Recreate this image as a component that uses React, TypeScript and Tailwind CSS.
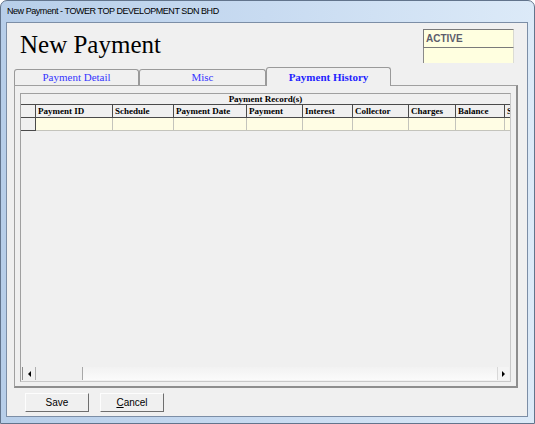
import React from "react";

const serif = { fontFamily: '"Liberation Serif", "Times New Roman", serif' };
const sans = { fontFamily: '"Liberation Sans", Arial, sans-serif' };

const cols: { label: string; w: number }[] = [
  { label: "Payment ID", w: 77 },
  { label: "Schedule", w: 61 },
  { label: "Payment Date", w: 73 },
  { label: "Payment", w: 56 },
  { label: "Interest", w: 50 },
  { label: "Collector", w: 56 },
  { label: "Charges", w: 47 },
  { label: "Balance", w: 49 },
  { label: "Status", w: 60 },
];

function Tab({ label, w, selected }: { label: string; w: number; selected?: boolean }) {
  if (selected) {
    return (
      <div
        className="relative z-10 -mb-px flex h-[19px] items-center justify-center rounded-t-[3px] border-l border-r border-t border-[#9a9a9a] bg-[#f0f0f0] text-[11px] font-bold leading-none text-[#1f1fff]"
        style={{ ...serif, width: w }}
      >
        <span className="mt-[1px]">{label}</span>
      </div>
    );
  }
  return (
    <div
      className="flex h-[16px] items-center justify-center rounded-t-[3px] border-l border-r border-t border-[#9a9a9a] bg-[#f0f0f0] text-[11px] leading-none text-[#3535ff]"
      style={{ ...serif, width: w }}
    >
      <span className="mt-[-1px]">{label}</span>
    </div>
  );
}

function Btn({ children }: { children: React.ReactNode }) {
  return (
    <div
      className="flex h-[19px] w-[64px] items-center justify-center border-b border-l border-r border-t border-b-[#6e6e6e] border-l-[#fdfdfd] border-r-[#6e6e6e] border-t-[#fdfdfd] bg-[#f0f0f0] text-[10px] leading-none text-black"
      style={sans}
    >
      {children}
    </div>
  );
}

export default function App() {
  return (
    <div className="flex h-[424px] w-[535px] flex-col overflow-hidden rounded-t-[7px] border border-[#62748c] bg-linear-to-r from-[#b7cee9] via-[#c8dbf1] to-[#dceaf8] px-[5px] pb-[6px]">
      {/* title bar */}
      <div
        className="flex h-[21px] items-center pl-[1px] pt-[1px] text-[9px] tracking-[-0.45px] text-black"
        style={sans}
      >
        New Payment - TOWER TOP DEVELOPMENT SDN BHD
      </div>

      {/* client area */}
      <div className="flex w-[522px] flex-1 flex-col border border-[#7c8ea6] bg-[#f0f0f0]">
        {/* header */}
        <div className="flex h-[44px] items-start justify-between px-[13px]">
          <div className="mt-[9px] text-[25px] leading-none text-black" style={serif}>
            New Payment
          </div>
          <div className="mt-[6px] flex w-[91px] flex-col">
            <div
              className="flex h-[19px] items-center border-b border-l border-t border-r border-b-[#7a7a7a] border-l-[#7a7a7a] border-t-[#7a7a7a] border-r-[#d8d8d0] bg-[#ffffe0] pl-[2px] text-[10px] font-bold leading-none text-[#5c5c6c]"
              style={sans}
            >
              ACTIVE
            </div>
            <div className="h-[15px] border-l border-r border-l-[#8a8a8a] border-r-[#dcdcd4] bg-[#ffffe0]" />
          </div>
        </div>

        {/* tabs */}
        <div className="flex h-[18px] items-end pl-[7px]">
          <Tab label="Payment Detail" w={125} />
          <Tab label="Misc" w={127} />
          <Tab label="Payment History" w={125} selected />
        </div>

        {/* tab panel */}
        <div className="ml-[7px] h-[303px] w-[504px] border-b-2 border-l border-r-2 border-t border-b-[#8e8e8e] border-l-[#a0a0a0] border-r-[#8e8e8e] border-t-[#a0a0a0] bg-[#f0f0f0] pl-[5px] pt-[7px]">
          {/* grid */}
          <div className="flex h-[289px] w-[491px] flex-col overflow-hidden border-l border-t border-r border-b border-l-[#a0a0a0] border-t-[#a0a0a0] border-r-[#c8c8c8] border-b-[#c8c8c8] bg-[#f0f0f0]">
            <div
              className="flex h-[10px] items-center justify-center text-[9px] font-bold leading-none text-black"
              style={serif}
            >
              <span className="mt-[1px]">Payment Record(s)</span>
            </div>
            {/* header row */}
            <div className="flex h-[14px] shrink-0 border-t border-b border-[#4a4a4a]" style={serif}>
              <div className="w-[15px] shrink-0 border-r border-[#4a4a4a]" />
              {cols.map((c) => (
                <div
                  key={c.label}
                  className="flex shrink-0 items-center overflow-hidden whitespace-nowrap border-r border-[#4a4a4a] pl-[2px] text-[9px] font-bold leading-none text-black"
                  style={{ width: c.w }}
                >
                  {c.label}
                </div>
              ))}
            </div>
            {/* data row */}
            <div className="flex h-[13px] shrink-0">
              <div className="w-[15px] shrink-0 border-b border-r border-[#4a4a4a] bg-[#f0f0f0]" />
              {cols.map((c) => (
                <div
                  key={c.label}
                  className="shrink-0 border-b border-r border-[#c4c4bc] bg-[#fffde4]"
                  style={{ width: c.w }}
                />
              ))}
            </div>

            <div className="flex-1" />

            {/* horizontal scrollbar */}
            <div className="mx-[1px] mb-[1px] flex h-[13px] shrink-0 bg-linear-to-b from-[#f2f2f2] to-[#fbfbfb]">
              <div className="flex w-[14px] shrink-0 items-center justify-center border-l border-r border-l-[#8a8a8a] border-r-[#b0b0b0] bg-[#f0f0f0]">
                <div className="h-0 w-0 border-b-[3px] border-r-[3px] border-t-[3px] border-b-transparent border-r-black border-t-transparent" />
              </div>
              <div className="w-[47px] shrink-0 border-r border-[#a8a8a8] bg-[#f0f0f0]" />
              <div className="flex-1" />
              <div className="flex w-[12px] shrink-0 items-center justify-center border-l border-[#d8d8d8] bg-[#f4f4f4]">
                <div className="h-0 w-0 border-b-[3px] border-l-[3px] border-t-[3px] border-b-transparent border-l-black border-t-transparent" />
              </div>
            </div>
          </div>
        </div>

        {/* buttons */}
        <div className="mt-[5px] flex gap-[11px] pl-[18px]">
          <Btn>Save</Btn>
          <Btn>
            <span>
              <span className="underline">C</span>ancel
            </span>
          </Btn>
        </div>
      </div>
    </div>
  );
}
